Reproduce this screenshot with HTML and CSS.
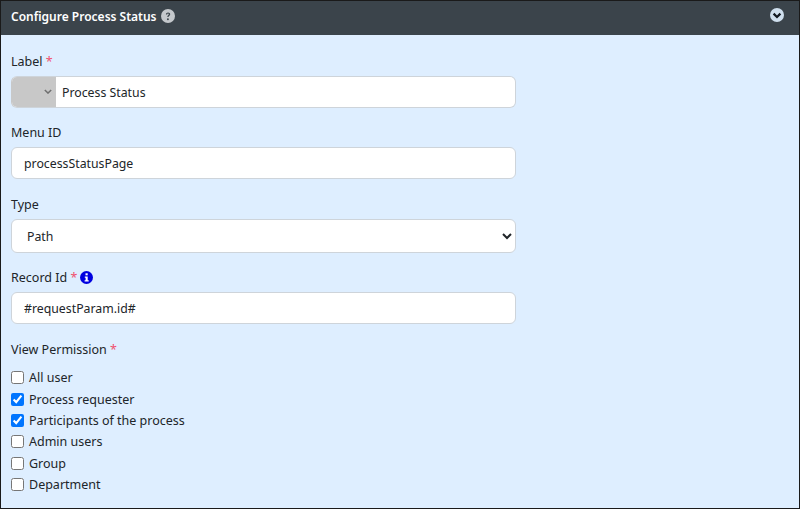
FILE: index.html
```html
<!DOCTYPE html>
<html lang="en">
<head>
<meta charset="utf-8">
<title>Configure Process Status</title>
<link rel="stylesheet" href="styles.css">
</head>
<body>
<div class="panel">
  <header class="head">
    <h1 class="title">Configure Process Status</h1>
    <svg class="help" viewBox="0 0 14 14" width="14" height="14"><circle cx="7" cy="7" r="7" fill="#c4c8cc"/><path d="M4.9 5.4c0-1.3 1-2 2.2-2 1.200 0 2.100.7 2.100 1.800 0 1.500-1.700 1.500-1.700 2.800H6.300c0-1.900 1.500-1.900 1.500-2.800 0-.4-.3-.7-.8-.7s-.8.3-.9.9z" fill="#3b444b"/><circle cx="6.900" cy="10.200" r=".95" fill="#3b444b"/></svg>
    <svg class="toggle" viewBox="0 0 14 14" width="14" height="14"><circle cx="7" cy="7" r="7" fill="#cfdfee"/><path d="M3.600 5.600 7 9l3.400-3.400" fill="none" stroke="#111820" stroke-width="2.200"/></svg>
  </header>
  <form class="form">
    <div class="field">
      <label class="lbl">Label <span class="req">*</span></label>
      <div class="combo">
        <div class="lang"><svg viewBox="0 0 10 6" width="8" height="5"><path d="M1 1l4 4 4-4" fill="none" stroke="#6f6f6f" stroke-width="1.800"/></svg></div>
        <input class="combo-input" type="text" value="Process Status">
      </div>
    </div>
    <div class="field">
      <label class="lbl">Menu ID</label>
      <input class="input" type="text" value="processStatusPage">
    </div>
    <div class="field">
      <label class="lbl">Type</label>
      <select class="input select"><option>Path</option></select>
    </div>
    <div class="field">
      <label class="lbl">Record Id <span class="req">*</span>
        <svg class="info" viewBox="0 0 13 13" width="13" height="13"><circle cx="6.500" cy="6.500" r="6.500" fill="#0000e0"/><rect x="5.500" y="2.300" width="2.200" height="2" fill="#fff"/><path d="M4.800 5.400h2.900v3.900h1v1.300H4.600V9.300h1V6.700h-.8z" fill="#fff"/></svg>
      </label>
      <input class="input" type="text" value="#requestParam.id#">
    </div>
    <div class="group">
      <label class="lbl">View Permission <span class="req">*</span></label>
      <div class="checks">
        <label class="check"><input type="checkbox">All user</label>
        <label class="check"><input type="checkbox" checked>Process requester</label>
        <label class="check"><input type="checkbox" checked>Participants of the process</label>
        <label class="check"><input type="checkbox">Admin users</label>
        <label class="check"><input type="checkbox">Group</label>
        <label class="check"><input type="checkbox">Department</label>
      </div>
    </div>
  </form>
</div>
</body>
</html>
```
FILE: styles.css
```css
* { box-sizing: border-box; }
html, body { margin: 0; height: 100%; }
body {
  font-family: "Noto Sans", "Open Sans", sans-serif;
  font-size: 12.500px;
  color: #212529;
  background: #deeeff;
  overflow: hidden;
}
.panel {
  height: 509px;
  border: 1px solid #1a1a1a;
  background: #deeeff;
}
.head {
  height: 34px;
  background: #3b444b;
  display: flex;
  align-items: center;
  padding: 0 15px 4px 10px;
  gap: 4px;
}
.title {
  margin: 0;
  font-size: 12px;
  font-weight: 600;
  color: #fff;
}
.toggle { margin-left: auto; margin-bottom: 2px; }
.form { padding: 16.600px 10px 0; }
.field { margin-bottom: 15.600px; width: 505px; }
.lbl { display: block; line-height: 20.800px; margin-bottom: 3.200px; color: #212529; }
.req { color: #f0506e; }
.info { vertical-align: -2px; margin-left: -1px; }
.input {
  display: block;
  width: 100%;
  height: 32px;
  border: 1px solid #ced4da;
  border-radius: 6px;
  background: #fff;
  padding: 1px 12px 0;
  font: inherit;
  font-size: 12.300px;
  color: #212529;
  outline: none;
}
.select { height: 34px; padding-left: 11px; }
.combo {
  display: flex;
  height: 32px;
  border: 1px solid #ced4da;
  border-left-color: #c8c8c8;
  border-radius: 6px;
  background: #fff;
  overflow: hidden;
}
.lang {
  width: 44px;
  background: #c8c8c8;
  display: flex;
  align-items: center;
  justify-content: flex-end;
  padding-right: 4px;
}
.combo-input {
  flex: 1;
  border: 0;
  padding: 1px 6px 0;
  font: inherit;
  font-size: 12.300px;
  color: #212529;
  outline: none;
  background: transparent;
}
.group { margin-top: 1.500px; }
.checks { display: flex; flex-direction: column; margin-top: 6.300px; }
.check {
  display: flex;
  align-items: center;
  gap: 5px;
  height: 21.400px;
}
.check input { width: 13px; height: 13px; margin: 0; }
```
